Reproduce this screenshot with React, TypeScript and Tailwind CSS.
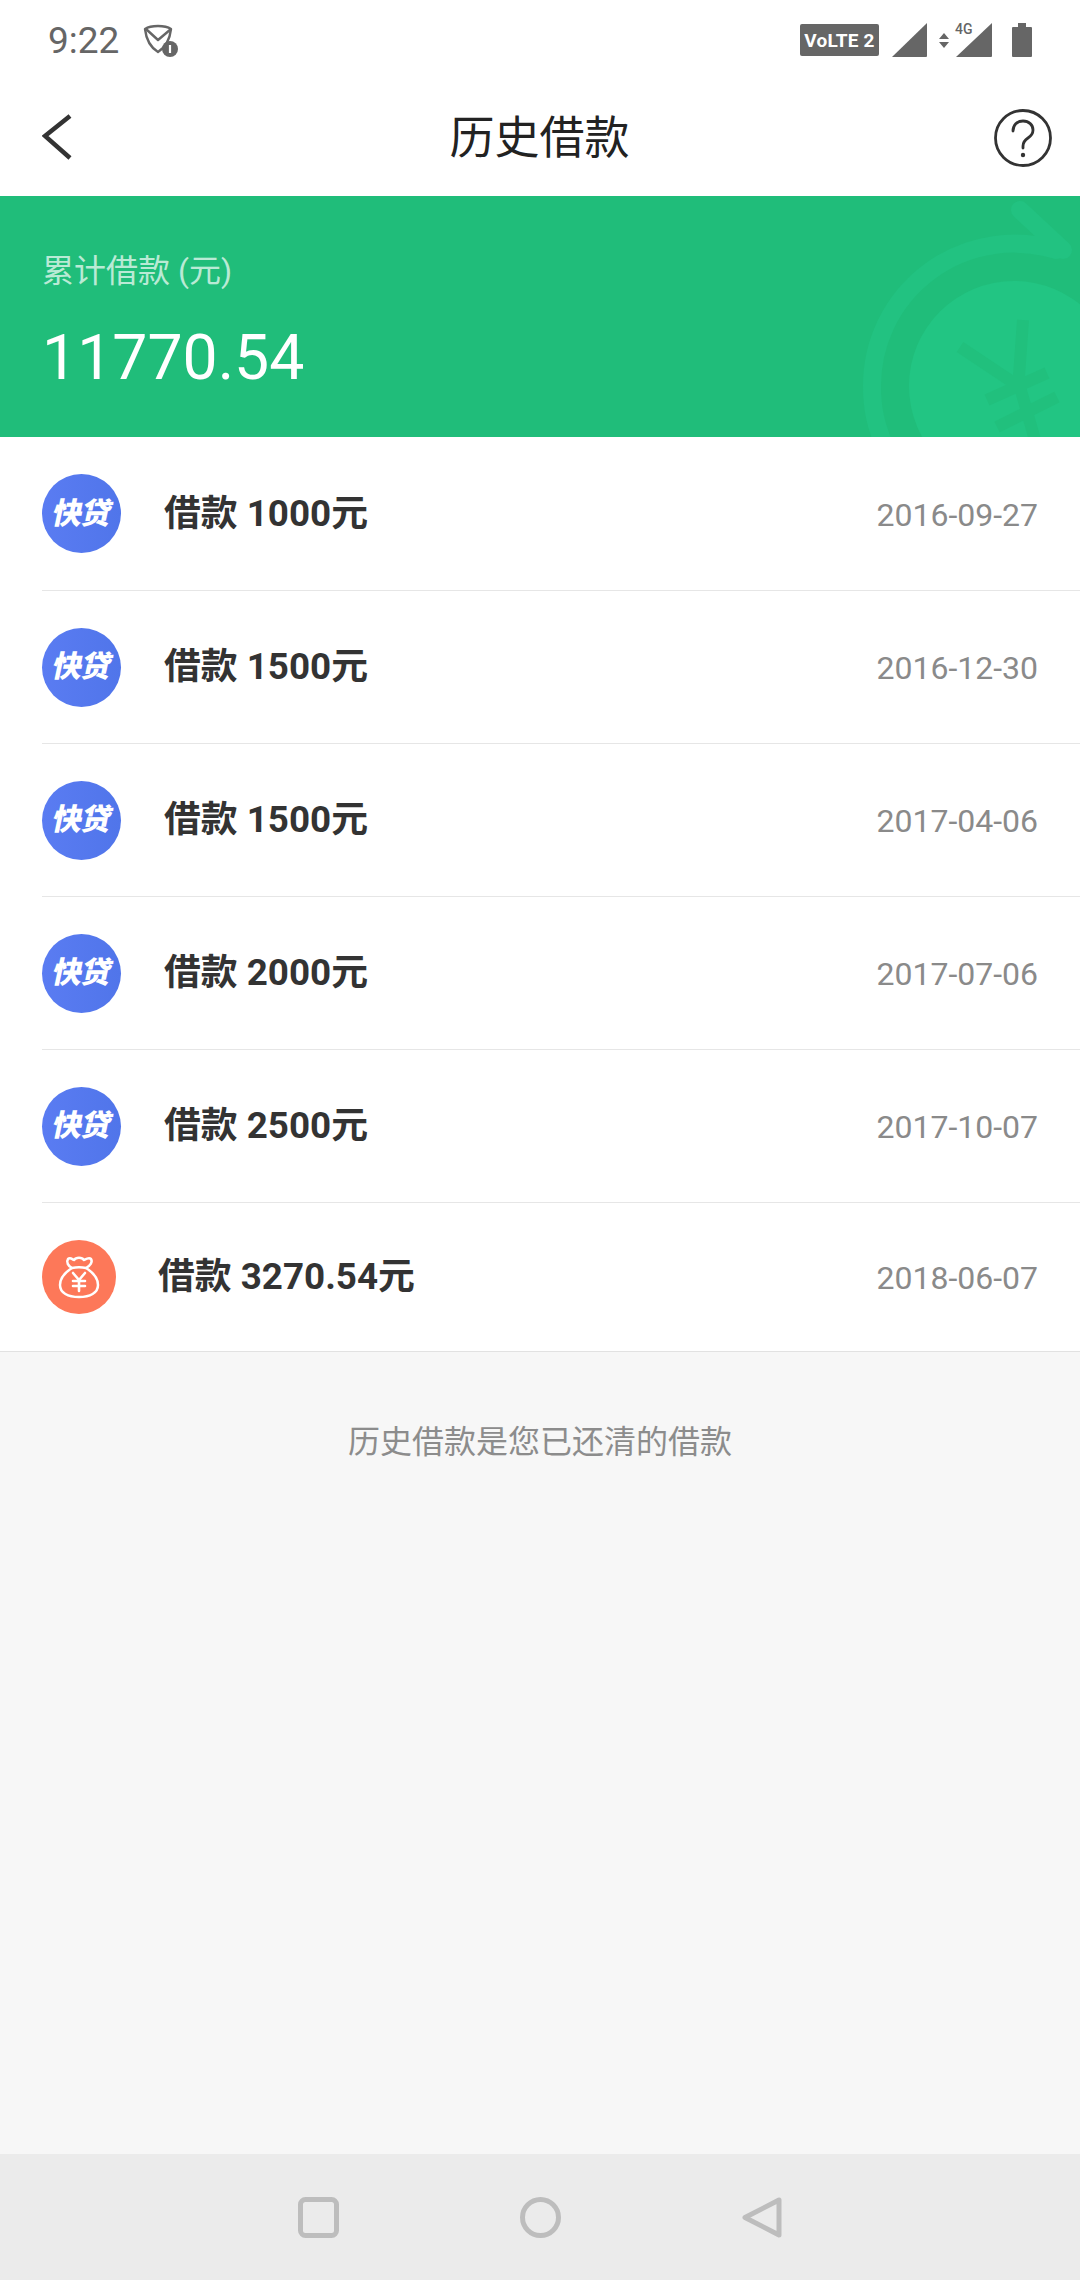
const rows = [
  { amount: "1000", date: "2016-09-27", h: "h-[154px]" },
  { amount: "1500", date: "2016-12-30", h: "h-[153px]" },
  { amount: "1500", date: "2017-04-06", h: "h-[153px]" },
  { amount: "2000", date: "2017-07-06", h: "h-[153px]" },
  { amount: "2500", date: "2017-10-07", h: "h-[153px]" },
];

function Logo() {
  return (
    <div className="flex h-[79px] w-[79px] shrink-0 items-center justify-center rounded-full bg-gradient-to-r from-[#5a7cf2] to-[#5075ea]">
      <span className="-skew-x-12 text-[30px] leading-none font-black tracking-[-1px] text-white">快贷</span>
    </div>
  );
}

function BagIcon() {
  return (
    <div className="flex h-[74px] w-[74px] shrink-0 items-center justify-center rounded-full bg-[#fd7859]">
      <svg width="74" height="74" viewBox="0 0 74 74" fill="none" stroke="#fff" strokeWidth="2.5" strokeLinecap="round" strokeLinejoin="round">
        <path d="M30 28C26 26 24 22 26 19C28 17 30 19 32 20C34 17 40 17 42 20C44 19 47 17 49 19C51 22 48 26 44 28" />
        <path d="M30 28C22 33 18 39 18 45C18 53 26 57 37 57C48 57 56 53 56 45C56 39 52 33 44 28C39 27 35 27 30 28Z" />
        <path d="M31 33l6 7 6-7M31 41h12M31 46h12M37 40v11" strokeWidth="2.6" />
      </svg>
    </div>
  );
}

function StatusBar() {
  return (
    <div className="flex h-[80px] items-center justify-between pr-[48px] pl-[48px] text-[#666]">
      <div className="flex items-center gap-[24px]">
        <span className="text-[37px] leading-none">9:22</span>
        <svg width="36" height="36" viewBox="0 0 36 36" fill="none" stroke="#666" strokeWidth="2.4" strokeLinejoin="round">
          <path d="M2 7c6-4 20-4 26 0-1 9-5 18-13 23C7 25 3 16 2 7z" />
          <path d="M3 7l12 11 13-11" />
          <circle cx="27" cy="27" r="8" fill="#666" stroke="none" />
          <path d="M27 23v8" stroke="#fff" strokeWidth="2.2" />
        </svg>
      </div>
      <div className="flex items-center">
        <div className="flex h-[32px] w-[79px] items-center justify-center rounded-[2px] bg-[#666] text-[19px] leading-none font-bold tracking-[0.2px] whitespace-nowrap text-white">
          VoLTE 2
        </div>
        <svg className="ml-[13px]" width="36" height="35" viewBox="0 0 36 35" fill="#666"><path d="M35 0v33a1 1 0 0 1-1 1H0z" /></svg>
        <svg className="ml-[10px]" width="54" height="36" viewBox="0 0 54 36" fill="#666">
          <path d="M54 1v33a1 1 0 0 1-1 1H18z" />
          <path d="M6 11l5 6H1zM6 26l5-6H1z" />
          <text x="17" y="12" fontSize="14" fontWeight="500" fontFamily="Roboto">4G</text>
        </svg>
        <svg className="ml-[20px]" width="20" height="34" viewBox="0 0 20 34" fill="#666"><path d="M6 0h8v4h5a1 1 0 0 1 1 1v28a1 1 0 0 1-1 1H1a1 1 0 0 1-1-1V5a1 1 0 0 1 1-1h5z" /></svg>
      </div>
    </div>
  );
}

export default function App() {
  return (
    <div className="flex h-[2280px] w-[1080px] flex-col bg-[#f7f7f7] font-['Roboto','Noto_Sans_CJK_SC',sans-serif]">
      <div className="bg-white">
        <StatusBar />
        <div className="grid h-[116px] grid-cols-3 items-center pr-[28px] pl-[42px]">
          <svg width="30" height="48" viewBox="0 0 30 48" fill="none" stroke="#333" strokeWidth="4.5"><path d="M28 2L3 22l25 22" /></svg>
          <span className="justify-self-center pr-[15px] text-[45px] leading-none whitespace-nowrap text-[#222]">历史借款</span>
          <svg className="justify-self-end" width="58" height="58" viewBox="0 0 58 58" fill="none" stroke="#333" strokeWidth="2.8" strokeLinecap="round">
            <circle cx="29" cy="29" r="27.5" />
            <path d="M19 22c0-6 4-10 10-10s10 4 10 9c0 4-2 6-5 8-3 2-5 4-5 8v2" />
            <circle cx="29" cy="46" r="2.2" fill="#333" stroke="none" />
          </svg>
        </div>
      </div>

      <div className="relative h-[241px] overflow-hidden bg-[#20bd7a] pl-[42px]">
        <svg className="absolute inset-0" width="1080" height="241" viewBox="0 196 1080 241" fill="none">
          <circle cx="1014" cy="386" r="105" fill="#22c583" />
          <path d="M1063 250L1020 210M1056 250A142 142 0 0 0 872 386C872 410 876 425 884 445" stroke="#22c281" strokeWidth="18" strokeLinecap="round" />
          <path d="M960 347L1020 387L1035 440M1023 320L1018 390M987 400L1047 373M997 427L1057 397" stroke="#21c07d" strokeWidth="12" />
        </svg>
        <div className="relative pt-[56px] text-[32px] leading-[38px] text-white/70">累计借款 (元)</div>
        <div className="relative mt-[33px] text-[62.5px] leading-[70px] text-white">11770.54</div>
      </div>

      <div className="bg-white">
        {rows.map((r) => (
          <div key={r.date} className={`ml-[42px] flex items-center border-b border-[#e6e6e6] pr-[42px] ${r.h}`}>
            <Logo />
            <span className="ml-[43px] pt-[1px] text-[36.8px] leading-none font-bold text-[#333]">借款 {r.amount}元</span>
            <span className="ml-auto pt-[2px] text-[32px] leading-none text-[#8a8a8a]">{r.date}</span>
          </div>
        ))}
        <div className="flex h-[149px] items-center border-b border-[#e2e2e2] pr-[42px] pl-[42px]">
          <BagIcon />
          <span className="ml-[42px] pt-[1px] text-[36.8px] leading-none font-bold text-[#333]">借款 3270.54元</span>
          <span className="ml-auto pt-[2px] text-[32px] leading-none text-[#8a8a8a]">2018-06-07</span>
        </div>
      </div>

      <div className="flex-1 pt-[70px] text-center text-[32px] leading-[40px] text-[#8c8c8c]">历史借款是您已还清的借款</div>

      <div className="flex h-[126px] items-center justify-center gap-[181px] bg-[#ebebeb]">
        <svg width="41" height="41" viewBox="0 0 41 41" fill="none" stroke="#bdbdbd" strokeWidth="5"><rect x="2.5" y="2.5" width="36" height="36" rx="5" /></svg>
        <svg width="41" height="41" viewBox="0 0 41 41" fill="none" stroke="#bdbdbd" strokeWidth="5"><circle cx="20.5" cy="20.5" r="18" /></svg>
        <svg width="41" height="41" viewBox="0 0 41 41" fill="none" stroke="#bdbdbd" strokeWidth="5" strokeLinejoin="round"><path d="M37 3v35L3 20.5z" /></svg>
      </div>
    </div>
  );
}
